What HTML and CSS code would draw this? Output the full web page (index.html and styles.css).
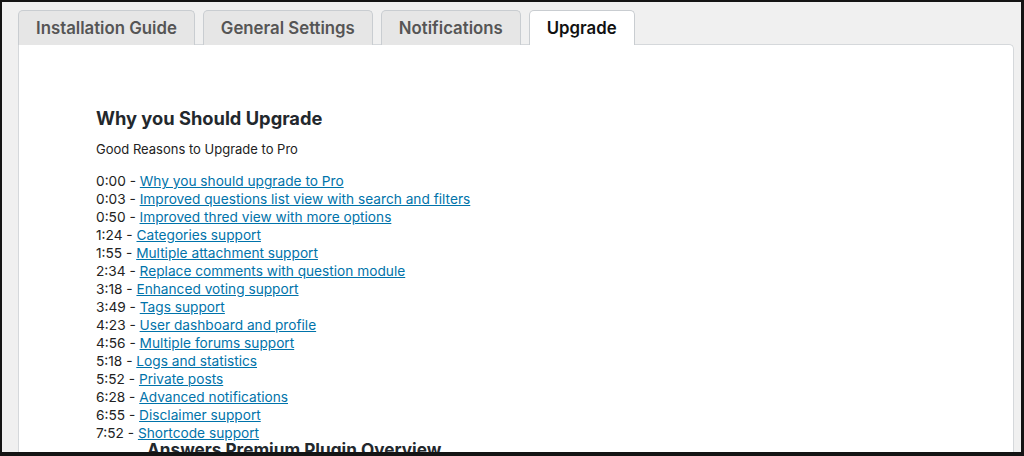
FILE: index.html
```html
<!DOCTYPE html>
<html lang="en">
<head>
<meta charset="utf-8">
<title>Upgrade</title>
<link rel="stylesheet" href="styles.css">
</head>
<body>
<div class="frame">
  <nav class="tabs">
    <a class="tab">Installation Guide</a>
    <a class="tab">General Settings</a>
    <a class="tab">Notifications</a>
    <a class="tab active">Upgrade</a>
  </nav>
  <section class="panel">
    <h2 class="title">Why you Should Upgrade</h2>
    <p class="sub">Good Reasons to Upgrade to Pro</p>
    <ul class="chapters">
      <li>0:00 - <a href="#">Why you should upgrade to Pro</a></li>
      <li>0:03 - <a href="#">Improved questions list view with search and filters</a></li>
      <li>0:50 - <a href="#">Improved thred view with more options</a></li>
      <li>1:24 - <a href="#">Categories support</a></li>
      <li>1:55 - <a href="#">Multiple attachment support</a></li>
      <li>2:34 - <a href="#">Replace comments with question module</a></li>
      <li>3:18 - <a href="#">Enhanced voting support</a></li>
      <li>3:49 - <a href="#">Tags support</a></li>
      <li>4:23 - <a href="#">User dashboard and profile</a></li>
      <li>4:56 - <a href="#">Multiple forums support</a></li>
      <li>5:18 - <a href="#">Logs and statistics</a></li>
      <li>5:52 - <a href="#">Private posts</a></li>
      <li>6:28 - <a href="#">Advanced notifications</a></li>
      <li>6:55 - <a href="#">Disclaimer support</a></li>
      <li>7:52 - <a href="#">Shortcode support</a></li>
    </ul>
    <h3 class="video-title">Answers Premium Plugin Overview</h3>
  </section>
</div>
</body>
</html>
```
FILE: styles.css
```css
html, body {
  margin: 0;
  padding: 0;
}
body {
  width: 1024px;
  height: 456px;
  overflow: hidden;
  background: #1a1a1a;
  font-family: Inter, "Liberation Sans", Arial, sans-serif;
}
.frame {
  box-sizing: border-box;
  width: 1024px;
  height: 456px;
  border-style: solid;
  border-color: #141414;
  border-width: 2px 3px 4px 2px;
  background: #f0f0f0;
  padding: 8px 7px 0 16px;
  display: flex;
  flex-direction: column;
  overflow: hidden;
}
.tabs {
  display: flex;
  gap: 8px;
  height: 34px;
  flex: none;
  position: relative;
  z-index: 1;
}
.tab {
  box-sizing: border-box;
  height: 35px;
  padding: 0 17px;
  border: 1px solid #c9cdd1;
  border-bottom: none;
  border-radius: 5px 5px 0 0;
  background: #e6e6e6;
  color: #555;
  font-weight: 600;
  font-size: 16.8px;
  line-height: 34px;
  white-space: nowrap;
}
.tab.active {
  background: #fff;
  color: #111;
}
.panel {
  flex: 1;
  background: #fff;
  border: 1px solid #d5d8db;
  border-bottom: none;
  border-radius: 0 5px 0 0;
  padding: 60px 0 0 77px;
  color: #222;
  overflow: hidden;
}
.title {
  margin: 0;
  font-size: 18.3px;
  line-height: 26px;
  font-weight: 700;
  color: #23282d;
}
.sub {
  margin: 9px 0 0;
  font-size: 13px;
  line-height: 18px;
}
.chapters {
  list-style: none;
  margin: 14px 0 0;
  padding: 0;
  font-size: 13.7px;
  line-height: 18px;
}
.chapters a {
  color: #0073aa;
  text-decoration: underline;
}
.video-title {
  margin: 0 0 0 51px;
  font-size: 17.2px;
  line-height: 16px;
  font-weight: 700;
  color: #23282d;
}
```
